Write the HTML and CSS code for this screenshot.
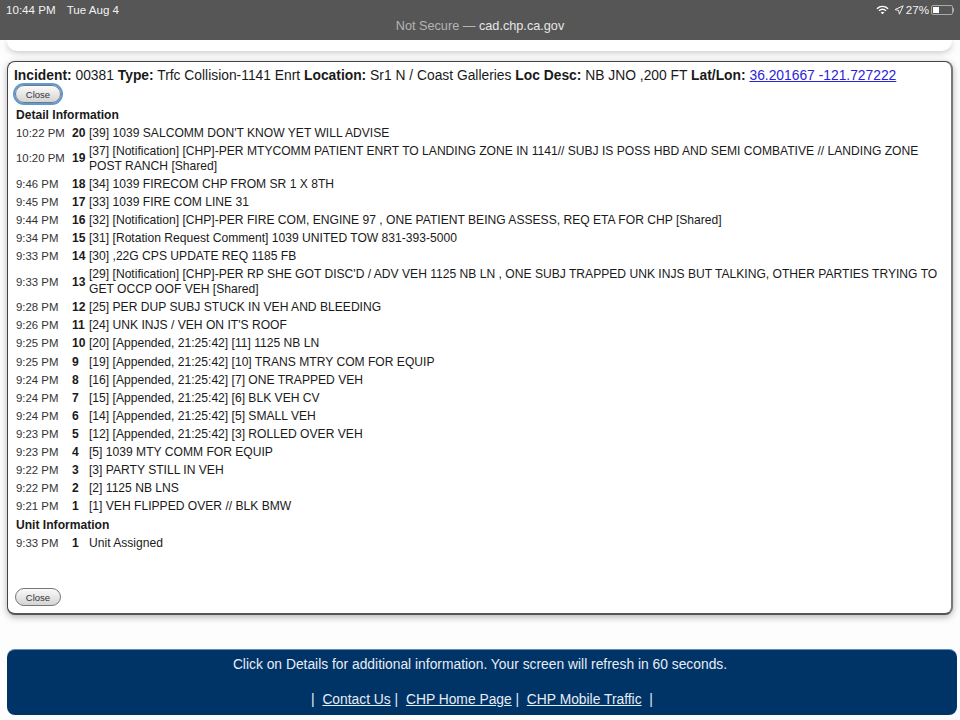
FILE: index.html
```html
<!DOCTYPE html>
<html lang="en">
<head>
    <meta charset="UTF-8">
    <title>CHP Traffic Incident</title>
    <link rel="stylesheet" href="styles.css">
</head>
<body>
    <!-- Safari top bar -->
    <header class="topbar">
        <div class="status-row">
            <span class="clock">10:44 PM</span>
            <span class="date">Tue Aug 4</span>
            <span class="status-icons">
                <svg class="wifi" width="13" height="10" viewBox="0 0 14 10">
                    <path d="M1 3.6C4.6.4 9.4.4 13 3.6" fill="none" stroke="#fff" stroke-width="1.6"/>
                    <path d="M3.2 5.8C5.6 3.8 8.4 3.8 10.8 5.8" fill="none" stroke="#fff" stroke-width="1.6"/>
                    <path d="M7 9.6 5 7.6C6.2 6.7 7.8 6.7 9 7.6Z" fill="#fff"/>
                </svg>
                <svg class="arrow" width="10" height="10" viewBox="0 0 10 10">
                    <path d="M9.2.8 1 4.6l3.6.8.8 3.8Z" fill="none" stroke="#eee" stroke-width="1"/>
                </svg>
                <span class="battery-text">27%</span>
                <span class="battery"><span class="battery-level"></span></span>
                <span class="battery-cap"></span>
            </span>
        </div>
        <div class="url-row"><span class="not-secure">Not Secure —</span> cad.chp.ca.gov</div>
    </header>

    <div class="page">
        <div class="top-card"></div>

        <section class="incident">
            <p class="summary">
                <b>Incident:</b> 00381 <b>Type:</b> Trfc Collision-1141 Enrt <b>Location:</b> Sr1 N / Coast Galleries <b>Loc Desc:</b> NB JNO ,200 FT <b>Lat/Lon:</b> <a href="#">36.201667 -121.727222</a>
            </p>
            <button class="close-btn focused">Close</button>

            <h2>Detail Information</h2>
            <table class="log">
                <tr><td>10:22 PM</td><th>20</th><td>[39] 1039 SALCOMM DON'T KNOW YET WILL ADVISE</td></tr>
                <tr><td>10:20 PM</td><th>19</th><td>[37] [Notification] [CHP]-PER MTYCOMM PATIENT ENRT TO LANDING ZONE IN 1141// SUBJ IS POSS HBD AND SEMI COMBATIVE // LANDING ZONE POST RANCH [Shared]</td></tr>
                <tr><td>9:46 PM</td><th>18</th><td>[34] 1039 FIRECOM CHP FROM SR 1 X 8TH</td></tr>
                <tr><td>9:45 PM</td><th>17</th><td>[33] 1039 FIRE COM LINE 31</td></tr>
                <tr><td>9:44 PM</td><th>16</th><td>[32] [Notification] [CHP]-PER FIRE COM, ENGINE 97 , ONE PATIENT BEING ASSESS, REQ ETA FOR CHP [Shared]</td></tr>
                <tr><td>9:34 PM</td><th>15</th><td>[31] [Rotation Request Comment] 1039 UNITED TOW 831-393-5000</td></tr>
                <tr><td>9:33 PM</td><th>14</th><td>[30] ,22G CPS UPDATE REQ 1185 FB</td></tr>
                <tr><td>9:33 PM</td><th>13</th><td>[29] [Notification] [CHP]-PER RP SHE GOT DISC'D / ADV VEH 1125 NB LN , ONE SUBJ TRAPPED UNK INJS BUT TALKING, OTHER PARTIES TRYING TO GET OCCP OOF VEH [Shared]</td></tr>
                <tr><td>9:28 PM</td><th>12</th><td>[25] PER DUP SUBJ STUCK IN VEH AND BLEEDING</td></tr>
                <tr><td>9:26 PM</td><th>11</th><td>[24] UNK INJS / VEH ON IT'S ROOF</td></tr>
                <tr><td>9:25 PM</td><th>10</th><td>[20] [Appended, 21:25:42] [11] 1125 NB LN</td></tr>
                <tr><td>9:25 PM</td><th>9</th><td>[19] [Appended, 21:25:42] [10] TRANS MTRY COM FOR EQUIP</td></tr>
                <tr><td>9:24 PM</td><th>8</th><td>[16] [Appended, 21:25:42] [7] ONE TRAPPED VEH</td></tr>
                <tr><td>9:24 PM</td><th>7</th><td>[15] [Appended, 21:25:42] [6] BLK VEH CV</td></tr>
                <tr><td>9:24 PM</td><th>6</th><td>[14] [Appended, 21:25:42] [5] SMALL VEH</td></tr>
                <tr><td>9:23 PM</td><th>5</th><td>[12] [Appended, 21:25:42] [3] ROLLED OVER VEH</td></tr>
                <tr><td>9:23 PM</td><th>4</th><td>[5] 1039 MTY COMM FOR EQUIP</td></tr>
                <tr><td>9:22 PM</td><th>3</th><td>[3] PARTY STILL IN VEH</td></tr>
                <tr><td>9:22 PM</td><th>2</th><td>[2] 1125 NB LNS</td></tr>
                <tr><td>9:21 PM</td><th>1</th><td>[1] VEH FLIPPED OVER // BLK BMW</td></tr>
            </table>

            <h2 class="unit-head">Unit Information</h2>
            <table class="log unit-log">
                <tr><td>9:33 PM</td><th>1</th><td>Unit Assigned</td></tr>
            </table>

            <button class="close-btn bottom">Close</button>
        </section>

        <footer class="footer">
            <p class="refresh">Click on Details for additional information. Your screen will refresh in 60 seconds.</p>
            <p class="links">|&nbsp; <a href="#">Contact Us</a> |&nbsp; <a href="#">CHP Home Page</a> |&nbsp; <a href="#">CHP Mobile Traffic</a> &nbsp;|</p>
        </footer>
    </div>
</body>
</html>
```

FILE: styles.css
```css
* {
    margin: 0;
    padding: 0;
    box-sizing: border-box;
}

body {
    font-family: "Liberation Sans", Arial, sans-serif;
    background-color: #fdfdfd;
    color: #1a1a1a;
    height: 720px;
    overflow: hidden;
}

/* Safari top bar */
.topbar {
    height: 40px;
    background-color: #565656;
    color: #f2f2f2;
    position: relative;
}

.status-row {
    display: flex;
    align-items: center;
    height: 19px;
    padding: 0 6px 0 6px;
    font-size: 11.6px;
}

.date {
    margin-left: 11px;
}

.status-icons {
    margin-left: auto;
    display: flex;
    align-items: center;
}

.arrow {
    margin-left: 5px;
}

.battery-text {
    margin-left: 2px;
}

.battery {
    width: 22px;
    height: 10px;
    margin-left: 2px;
    border: 1px solid #aaa;
    border-radius: 2px;
    padding: 1px;
}

.battery-level {
    display: block;
    width: 6px;
    height: 100%;
    background-color: #fff;
}

.battery-cap {
    width: 1px;
    height: 4px;
    background-color: #aaa;
}

.url-row {
    text-align: center;
    font-size: 12.7px;
    color: #e6e6e6;
}

.not-secure {
    color: #b4b4b4;
}

/* Contenu */
.page {
    padding: 0 3px 0 7px;
}

.top-card {
    height: 11px;
    margin-right: 5px;
    background-color: #fff;
    border-radius: 0 0 10px 10px;
    box-shadow: 0 2px 6px rgba(0, 0, 0, 0.2);
}

.incident {
    display: flex;
    flex-direction: column;
    align-items: flex-start;
    height: 554px;
    margin: 10px 4px 0 0;
    padding: 5px 6px 7px;
    background-color: #fff;
    border: 1px solid #444;
    border-right: 2px solid #777;
    border-bottom: 2px solid #555;
    border-radius: 8px;
    box-shadow: 0 2px 7px rgba(0, 0, 0, 0.3);
}

.summary {
    font-size: 13.83px;
    line-height: 17px;
    white-space: nowrap;
}

.summary a {
    color: #2a22d8;
}

.close-btn {
    width: 46px;
    height: 18px;
    margin: 1px 0 0 1px;
    font-family: inherit;
    font-size: 9.5px;
    color: #333;
    border: 1px solid #777;
    border-radius: 9px;
    background: linear-gradient(#fafafa, #d4d4d4);
}

.focused {
    box-shadow: 0 0 0 2px #5b9bd8;
}

.close-btn.bottom {
    margin-top: auto;
}

h2 {
    font-size: 12.1px;
    line-height: 15px;
    margin: 5px 0 0 2px;
}

h2.unit-head {
    margin-top: 2px;
}

.log {
    border-collapse: collapse;
    font-size: 12.1px;
    line-height: 15px;
    margin-top: 1px;
    width: 100%;
}

.unit-log {
    margin-top: 2px;
}

.log td,
.log th {
    padding: 1.55px 5px 1.55px 0;
    vertical-align: middle;
    text-align: left;
}

.log td:first-child {
    width: 58px;
    padding-left: 2px;
    padding-right: 0;
    font-size: 11.4px;
    color: #333;
    white-space: nowrap;
}

.log th {
    width: 17px;
    padding-right: 0;
}

/* Pied de page */
.footer {
    height: 66px;
    margin-top: 34px;
    padding-top: 6px;
    background-color: #003366;
    border-top: 1px solid #5b8db8;
    border-radius: 8px;
    color: #e6edf6;
    font-size: 13.83px;
    line-height: 17px;
    text-align: center;
}

.refresh {
    padding-right: 4px;
}

.links {
    margin-top: 18px;
}

.footer a {
    color: #e6edf6;
}
```
